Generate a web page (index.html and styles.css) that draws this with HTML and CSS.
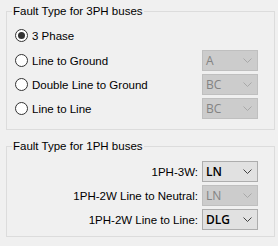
FILE: index.html
```html
<!DOCTYPE html>
<html lang="en">

<head>
    <meta charset="UTF-8">
    <meta name="viewport" content="width=device-width, initial-scale=1.0">
    <link rel="stylesheet" href="styles.css">
</head>

<body>
    <fieldset class="group group-3ph">
        <legend>Fault Type for 3PH buses</legend>
        <div class="rows">
            <label class="radio checked"><span class="circle"></span>3 Phase</label>
            <span></span>

            <label class="radio"><span class="circle"></span>Line to Ground</label>
            <div class="combo disabled"><span>A</span><svg class="chev" viewBox="0 0 9 5"><path d="M0.5 0.5 L4.5 4.5 L8.5 0.5" /></svg></div>

            <label class="radio"><span class="circle"></span>Double Line to Ground</label>
            <div class="combo disabled"><span>BC</span><svg class="chev" viewBox="0 0 9 5"><path d="M0.5 0.5 L4.5 4.5 L8.5 0.5" /></svg></div>

            <label class="radio"><span class="circle"></span>Line to Line</label>
            <div class="combo disabled"><span>BC</span><svg class="chev" viewBox="0 0 9 5"><path d="M0.5 0.5 L4.5 4.5 L8.5 0.5" /></svg></div>
        </div>
    </fieldset>

    <fieldset class="group group-1ph">
        <legend>Fault Type for 1PH buses</legend>
        <div class="rows">
            <span class="field-label">1PH-3W:</span>
            <div class="combo"><span>LN</span><svg class="chev" viewBox="0 0 9 5"><path d="M0.5 0.5 L4.5 4.5 L8.5 0.5" /></svg></div>

            <span class="field-label">1PH-2W Line to Neutral:</span>
            <div class="combo disabled"><span>LN</span><svg class="chev" viewBox="0 0 9 5"><path d="M0.5 0.5 L4.5 4.5 L8.5 0.5" /></svg></div>

            <span class="field-label">1PH-2W Line to Line:</span>
            <div class="combo"><span>DLG</span><svg class="chev" viewBox="0 0 9 5"><path d="M0.5 0.5 L4.5 4.5 L8.5 0.5" /></svg></div>
        </div>
    </fieldset>
</body>

</html>
```

FILE: styles.css
```css
html {
    background-color: #f0f0f0;
}

body {
    margin: 0;
    padding: 4px 3px 0 6px;
    font-family: "Liberation Sans", Arial, sans-serif;
    font-size: 11.5px;
    line-height: 14px;
    color: #000;
}

.group {
    margin: 0;
    border: 1px solid #dcdcdc;
    min-width: 0;
}

.group legend {
    padding: 0 1px;
    margin-left: -3px;
}

.group-3ph {
    padding: 6px 16px 10px 8px;
}

.group-1ph {
    margin-top: 9px;
    padding: 8px 16px 6px 8px;
}

.rows {
    display: grid;
    grid-template-columns: 1fr 56px;
    grid-auto-rows: 21px;
    row-gap: 3px;
    align-items: center;
}

.group-3ph .rows {
    grid-template-rows: 23px;
}

.group-1ph .rows {
    column-gap: 4px;
}

.radio {
    display: flex;
    align-items: center;
    gap: 4px;
    white-space: nowrap;
}

.circle {
    width: 11px;
    height: 11px;
    border: 1px solid #333;
    border-radius: 50%;
    background-color: #fff;
    display: flex;
    align-items: center;
    justify-content: center;
}

.checked .circle::after {
    content: "";
    width: 7px;
    height: 7px;
    border-radius: 50%;
    background-color: #333;
}

.field-label {
    text-align: right;
    white-space: nowrap;
}

.combo {
    height: 21px;
    box-sizing: border-box;
    border: 1px solid #adadad;
    background-color: #e1e1e1;
    display: flex;
    align-items: center;
    justify-content: space-between;
    padding: 0 5px 0 3px;
    font-family: "Open Sans", "Noto Sans", sans-serif;
    font-size: 12px;
    font-weight: 600;
    color: #000;
}

.combo.disabled {
    background-color: #cccccc;
    border-color: #bfbfbf;
    color: #838383;
    font-weight: 400;
}

.chev {
    width: 9px;
    height: 5px;
    fill: none;
    stroke: #404040;
    stroke-width: 1;
}

.disabled .chev {
    stroke: #a8a8a8;
}
```
